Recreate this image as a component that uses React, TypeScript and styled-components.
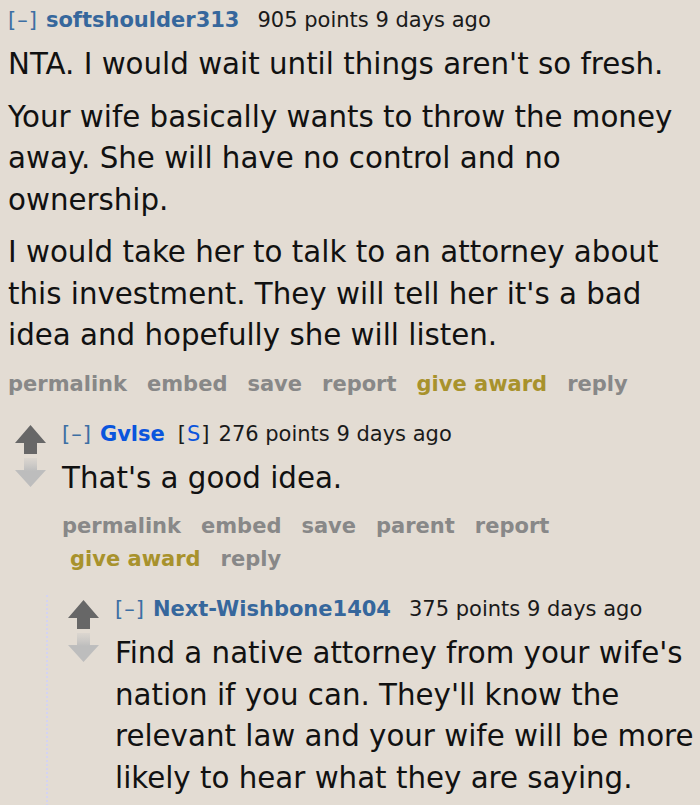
import React from 'react';
import styled, { createGlobalStyle } from 'styled-components';

const GlobalStyle = createGlobalStyle`
  html, body {
    margin: 0;
    padding: 0;
    background: #e3dcd3;
  }
  body {
    font-family: "DejaVu Sans", Verdana, sans-serif;
    color: #111;
  }
`;

const Page = styled.div`
  width: 700px;
  height: 805px;
  overflow: hidden;
  box-sizing: border-box;
  padding: 6px 0 0 8px;
`;

const CommentBox = styled.div`
  display: flex;
  flex-direction: column;
`;

const Row = styled.div`
  display: flex;
  align-items: flex-start;
`;

const Midcol = styled.div`
  width: 31px;
  flex: none;
  margin-right: 16px;
  padding-top: 5px;
  display: flex;
  flex-direction: column;
  gap: 4px;
`;

const Entry = styled.div`
  flex: 1;
  min-width: 0;
`;

const ChildList = styled.div<{ $indent: number; $bordered?: boolean }>`
  margin-top: 19px;
  margin-left: ${({ $indent }) => $indent}px;
  padding-left: ${({ $bordered }) => ($bordered ? '20px' : '0')};
  border-left: ${({ $bordered }) => ($bordered ? '2px dotted #d4d4f2' : 'none')};
`;

const Tagline = styled.div`
  display: flex;
  align-items: baseline;
  font-size: 21px;
  line-height: 28px;
  color: #1a1a1a;
  white-space: nowrap;
  margin-bottom: 10px;
`;

const Toggle = styled.span`
  color: #3d6fa3;
  margin-right: 8px;
  letter-spacing: 1px;
`;

const Author = styled.span<{ $submitter?: boolean }>`
  font-weight: bold;
  color: ${({ $submitter }) => ($submitter ? '#0a55dd' : '#36679c')};
  margin-right: ${({ $submitter }) => ($submitter ? '13px' : '18px')};
`;

const Flair = styled.span`
  margin-right: 8px;
  letter-spacing: 1px;
  & > b {
    font-weight: normal;
    color: #0a55dd;
  }
`;

const Body = styled.div`
  font-size: 29.3px;
  line-height: 41.5px;
  color: #111;
`;

const Para = styled.p`
  margin: 0 0 11px 0;
`;

const FlatList = styled.ul`
  display: flex;
  flex-wrap: wrap;
  list-style: none;
  margin: 0;
  padding: 0;
  font-size: 21px;
  line-height: 33px;
  font-weight: bold;
`;

const FlatItem = styled.li<{ $gold?: boolean }>`
  padding-left: 8px;
  margin-right: 12px;
  color: ${({ $gold }) => ($gold ? '#a8922c' : '#888888')};
  white-space: nowrap;
  &:first-child {
    padding-left: 0;
  }
`;

const UpArrow = () => (
  <svg width="31" height="29" viewBox="0 0 31 29">
    <path d="M15.5 0 L31 18 L22 18 L22 29 L9 29 L9 18 L0 18 Z" fill="#676767" />
  </svg>
);

const DownArrow = () => (
  <svg width="31" height="29" viewBox="0 0 31 29">
    <defs>
      <linearGradient id="fade" x1="0" y1="0" x2="0" y2="1">
        <stop offset="0" stopColor="#c4c4c4" stopOpacity="0.25" />
        <stop offset="0.45" stopColor="#bdbdbd" stopOpacity="1" />
        <stop offset="1" stopColor="#bdbdbd" />
      </linearGradient>
    </defs>
    <path d="M9 0 L22 0 L22 12 L31 12 L15.5 29 L0 12 L9 12 Z" fill="url(#fade)" />
  </svg>
);

type Action = { label: string; gold?: boolean };

const Actions: React.FC<{ items: Action[] }> = ({ items }) => (
  <FlatList>
    {items.map((a) => (
      <FlatItem key={a.label} $gold={a.gold}>
        {a.label}
      </FlatItem>
    ))}
  </FlatList>
);

const Header: React.FC<{ author: string; submitter?: boolean; points: string }> = ({
  author,
  submitter,
  points,
}) => (
  <Tagline>
    <Toggle>[–]</Toggle>
    <Author $submitter={submitter}>{author}</Author>
    {submitter && (
      <Flair>
        [<b>S</b>]
      </Flair>
    )}
    <span>{points} points 9 days ago</span>
  </Tagline>
);

const Votes = () => (
  <Midcol>
    <UpArrow />
    <DownArrow />
  </Midcol>
);

const topActions: Action[] = [
  { label: 'permalink' },
  { label: 'embed' },
  { label: 'save' },
  { label: 'report' },
  { label: 'give award', gold: true },
  { label: 'reply' },
];

const childActions: Action[] = [
  { label: 'permalink' },
  { label: 'embed' },
  { label: 'save' },
  { label: 'parent' },
  { label: 'report' },
  { label: 'give award', gold: true },
  { label: 'reply' },
];

export default function App() {
  return (
    <>
      <GlobalStyle />
      <Page>
        <CommentBox>
          <Entry>
            <Header author="softshoulder313" points="905" />
            <Body>
              <Para>NTA. I would wait until things aren't so fresh.</Para>
              <Para>
                Your wife basically wants to throw the money away. She will have no control and no
                ownership.
              </Para>
              <Para>
                I would take her to talk to an attorney about this investment. They will tell her
                it's a bad idea and hopefully she will listen.
              </Para>
            </Body>
            <Actions items={topActions} />
          </Entry>

          <ChildList $indent={7}>
            <CommentBox>
              <Row>
                <Votes />
                <Entry>
                  <Header author="Gvlse" submitter points="276" />
                  <Body>
                    <Para>That's a good idea.</Para>
                  </Body>
                  <Actions items={childActions} />
                </Entry>
              </Row>

              <ChildList $indent={31} $bordered>
                <CommentBox>
                  <Row>
                    <Votes />
                    <Entry>
                      <Header author="Next-Wishbone1404" points="375" />
                      <Body>
                        <Para>
                          Find a native attorney from your wife's nation if you can. They'll know
                          the relevant law and your wife will be more likely to hear what they are
                          saying.
                        </Para>
                      </Body>
                    </Entry>
                  </Row>
                </CommentBox>
              </ChildList>
            </CommentBox>
          </ChildList>
        </CommentBox>
      </Page>
    </>
  );
}
